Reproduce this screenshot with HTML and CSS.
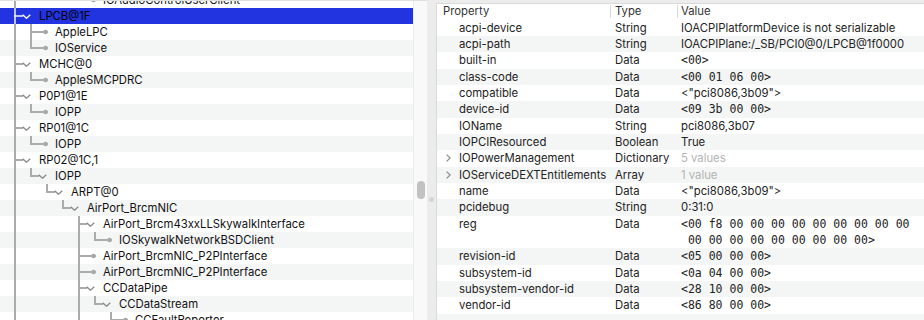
FILE: index.html
```html
<!DOCTYPE html>
<html>
  <head>
    <title>IORegistryExplorer - LPCB@1F</title>
    <link rel="stylesheet" href="styles.css">
  </head>

  <body>
    <div class="window">
      <!-- Arbol del registro -->
      <div class="tree-pane">
        <div class="tree">
          <div class="tree-list">
            <div class="node leaf"><i class="guide pipe"></i><i class="guide"></i><i class="guide"></i><i class="guide"></i><i class="guide elbow"></i><span class="mark"></span><span class="label">IOAudioControlUserClient</span></div>
            <div class="node branch selected"><i class="guide tee"></i><span class="mark"><svg width="9" height="5" viewBox="0 0 9 5"><polyline points="0.7,0.7 4.5,4.3 8.3,0.7"/></svg></span><span class="label">LPCB@1F</span></div>
            <div class="node leaf"><i class="guide pipe"></i><i class="guide tee"></i><span class="mark"></span><span class="label">AppleLPC</span></div>
            <div class="node leaf"><i class="guide pipe"></i><i class="guide elbow"></i><span class="mark"></span><span class="label">IOService</span></div>
            <div class="node branch"><i class="guide tee"></i><span class="mark"><svg width="9" height="5" viewBox="0 0 9 5"><polyline points="0.7,0.7 4.5,4.3 8.3,0.7"/></svg></span><span class="label">MCHC@0</span></div>
            <div class="node leaf"><i class="guide pipe"></i><i class="guide elbow"></i><span class="mark"></span><span class="label">AppleSMCPDRC</span></div>
            <div class="node branch"><i class="guide tee"></i><span class="mark"><svg width="9" height="5" viewBox="0 0 9 5"><polyline points="0.7,0.7 4.5,4.3 8.3,0.7"/></svg></span><span class="label">P0P1@1E</span></div>
            <div class="node leaf"><i class="guide pipe"></i><i class="guide elbow"></i><span class="mark"></span><span class="label">IOPP</span></div>
            <div class="node branch"><i class="guide tee"></i><span class="mark"><svg width="9" height="5" viewBox="0 0 9 5"><polyline points="0.7,0.7 4.5,4.3 8.3,0.7"/></svg></span><span class="label">RP01@1C</span></div>
            <div class="node leaf"><i class="guide pipe"></i><i class="guide elbow"></i><span class="mark"></span><span class="label">IOPP</span></div>
            <div class="node branch"><i class="guide tee"></i><span class="mark"><svg width="9" height="5" viewBox="0 0 9 5"><polyline points="0.7,0.7 4.5,4.3 8.3,0.7"/></svg></span><span class="label">RP02@1C,1</span></div>
            <div class="node branch"><i class="guide pipe"></i><i class="guide elbow"></i><span class="mark"><svg width="9" height="5" viewBox="0 0 9 5"><polyline points="0.7,0.7 4.5,4.3 8.3,0.7"/></svg></span><span class="label">IOPP</span></div>
            <div class="node branch"><i class="guide pipe"></i><i class="guide"></i><i class="guide elbow"></i><span class="mark"><svg width="9" height="5" viewBox="0 0 9 5"><polyline points="0.7,0.7 4.5,4.3 8.3,0.7"/></svg></span><span class="label">ARPT@0</span></div>
            <div class="node branch"><i class="guide pipe"></i><i class="guide"></i><i class="guide"></i><i class="guide elbow"></i><span class="mark"><svg width="9" height="5" viewBox="0 0 9 5"><polyline points="0.7,0.7 4.5,4.3 8.3,0.7"/></svg></span><span class="label">AirPort_BrcmNIC</span></div>
            <div class="node branch"><i class="guide pipe"></i><i class="guide"></i><i class="guide"></i><i class="guide"></i><i class="guide tee"></i><span class="mark"><svg width="9" height="5" viewBox="0 0 9 5"><polyline points="0.7,0.7 4.5,4.3 8.3,0.7"/></svg></span><span class="label">AirPort_Brcm43xxLLSkywalkInterface</span></div>
            <div class="node leaf"><i class="guide pipe"></i><i class="guide"></i><i class="guide"></i><i class="guide"></i><i class="guide pipe"></i><i class="guide elbow"></i><span class="mark"></span><span class="label">IOSkywalkNetworkBSDClient</span></div>
            <div class="node leaf"><i class="guide pipe"></i><i class="guide"></i><i class="guide"></i><i class="guide"></i><i class="guide tee"></i><span class="mark"></span><span class="label">AirPort_BrcmNIC_P2PInterface</span></div>
            <div class="node leaf"><i class="guide pipe"></i><i class="guide"></i><i class="guide"></i><i class="guide"></i><i class="guide tee"></i><span class="mark"></span><span class="label">AirPort_BrcmNIC_P2PInterface</span></div>
            <div class="node branch"><i class="guide pipe"></i><i class="guide"></i><i class="guide"></i><i class="guide"></i><i class="guide tee"></i><span class="mark"><svg width="9" height="5" viewBox="0 0 9 5"><polyline points="0.7,0.7 4.5,4.3 8.3,0.7"/></svg></span><span class="label">CCDataPipe</span></div>
            <div class="node branch"><i class="guide pipe"></i><i class="guide"></i><i class="guide"></i><i class="guide"></i><i class="guide pipe"></i><i class="guide elbow"></i><span class="mark"><svg width="9" height="5" viewBox="0 0 9 5"><polyline points="0.7,0.7 4.5,4.3 8.3,0.7"/></svg></span><span class="label">CCDataStream</span></div>
            <div class="node leaf"><i class="guide pipe"></i><i class="guide"></i><i class="guide"></i><i class="guide"></i><i class="guide pipe"></i><i class="guide"></i><i class="guide tee"></i><span class="mark"></span><span class="label">CCFaultReporter</span></div>
          </div>
        </div>
        <div class="vscroll"><div class="thumb"></div></div>
      </div>

      <div class="splitter"><span class="grip"></span></div>

      <!-- Propiedades del nodo -->
      <div class="props">
        <div class="props-head">
          <div class="col">Property</div>
          <div class="col">Type</div>
          <div class="col">Value</div>
        </div>
        <div class="prop-list">
          <div class="prop"><div class="name"><span class="disc"></span>acpi-device</div><div class="type">String</div><div class="value">IOACPIPlatformDevice is not serializable</div></div>
          <div class="prop"><div class="name"><span class="disc"></span>acpi-path</div><div class="type">String</div><div class="value">IOACPIPlane:/_SB/PCI0@0/LPCB@1f0000</div></div>
          <div class="prop"><div class="name"><span class="disc"></span>built-in</div><div class="type">Data</div><div class="value mono">&lt;00&gt;</div></div>
          <div class="prop"><div class="name"><span class="disc"></span>class-code</div><div class="type">Data</div><div class="value mono">&lt;00 01 06 00&gt;</div></div>
          <div class="prop"><div class="name"><span class="disc"></span>compatible</div><div class="type">Data</div><div class="value">&lt;"pci8086,3b09"&gt;</div></div>
          <div class="prop"><div class="name"><span class="disc"></span>device-id</div><div class="type">Data</div><div class="value mono">&lt;09 3b 00 00&gt;</div></div>
          <div class="prop"><div class="name"><span class="disc"></span>IOName</div><div class="type">String</div><div class="value">pci8086,3b07</div></div>
          <div class="prop"><div class="name"><span class="disc"></span>IOPCIResourced</div><div class="type">Boolean</div><div class="value">True</div></div>
          <div class="prop"><div class="name"><span class="disc"><svg width="5" height="8" viewBox="0 0 5 8"><polyline points="0.6,0.6 4.2,4 0.6,7.4"/></svg></span>IOPowerManagement</div><div class="type">Dictionary</div><div class="value dim">5 values</div></div>
          <div class="prop"><div class="name"><span class="disc"><svg width="5" height="8" viewBox="0 0 5 8"><polyline points="0.6,0.6 4.2,4 0.6,7.4"/></svg></span>IOServiceDEXTEntitlements</div><div class="type">Array</div><div class="value dim">1 value</div></div>
          <div class="prop"><div class="name"><span class="disc"></span>name</div><div class="type">Data</div><div class="value">&lt;"pci8086,3b09"&gt;</div></div>
          <div class="prop"><div class="name"><span class="disc"></span>pcidebug</div><div class="type">String</div><div class="value">0:31:0</div></div>
          <div class="prop tall"><div class="name"><span class="disc"></span>reg</div><div class="type">Data</div><div class="value mono"><div>&lt;00 f8 00 00 00 00 00 00 00 00 00</div><div class="wrap">00 00 00 00 00 00 00 00 00&gt;</div></div></div>
          <div class="prop"><div class="name"><span class="disc"></span>revision-id</div><div class="type">Data</div><div class="value mono">&lt;05 00 00 00&gt;</div></div>
          <div class="prop"><div class="name"><span class="disc"></span>subsystem-id</div><div class="type">Data</div><div class="value mono">&lt;0a 04 00 00&gt;</div></div>
          <div class="prop"><div class="name"><span class="disc"></span>subsystem-vendor-id</div><div class="type">Data</div><div class="value mono">&lt;28 10 00 00&gt;</div></div>
          <div class="prop"><div class="name"><span class="disc"></span>vendor-id</div><div class="type">Data</div><div class="value mono">&lt;86 80 00 00&gt;</div></div>
          <div class="prop"></div>
        </div>
      </div>
    </div>
  </body>
</html>
```

FILE: styles.css
```css
body {
  margin: 0;
  background: #ececec;
  font-family: Inter, "Noto Sans", sans-serif;
  font-size: 11.3px;
  color: #111;
}
.window {
  display: flex;
  height: 320px;
  overflow: hidden;
}

/* arbol */
.tree-pane {
  width: 427px;
  flex: none;
  display: flex;
  background: #fff;
  border-top: 1px solid #e0e0e0;
}
.tree {
  flex: 1;
  overflow: hidden;
}
.tree-list {
  margin-top: -9px;
}
.node {
  --line: #ababab;
  --chev: #8c8c8c;
  display: flex;
  height: 16px;
  padding-left: 7px;
  white-space: nowrap;
}
.node:nth-child(even) {
  background: #f4f5f5;
}
.node.selected {
  --line: rgba(255, 255, 255, 0.7);
  --chev: #fff;
  background: #2234e0;
  color: #000;
}
.guide {
  width: 16px;
  flex: none;
}
.pipe {
  background: linear-gradient(var(--line), var(--line)) 7px 0 / 2px 100% no-repeat;
}
.tee {
  background:
    linear-gradient(var(--line), var(--line)) 7px 0 / 2px 100% no-repeat,
    linear-gradient(var(--line), var(--line)) 7px 7px / 9px 2px no-repeat;
}
.elbow {
  background:
    linear-gradient(var(--line), var(--line)) 7px 0 / 2px 9px no-repeat,
    linear-gradient(var(--line), var(--line)) 7px 7px / 9px 2px no-repeat;
}
.mark {
  width: 16px;
  flex: none;
  display: flex;
  align-items: center;
}
.leaf .mark {
  background:
    linear-gradient(var(--line), var(--line)) 0 7px / 5px 2px no-repeat,
    radial-gradient(circle at 6.5px 8px, var(--line) 2.1px, transparent 2.7px);
}
.mark svg {
  margin-left: -1px;
  fill: none;
  stroke: var(--chev);
  stroke-width: 1.3;
}
.label {
  line-height: 16px;
}
.vscroll {
  width: 14px;
  flex: none;
  box-sizing: border-box;
  background: #f9f9f9;
  border-left: 1px solid #ececec;
}
.thumb {
  width: 8px;
  height: 18px;
  margin: 180px 0 0 3px;
  border-radius: 4px;
  background: #c2c2c2;
}

/* separador */
.splitter {
  width: 9px;
  flex: none;
  padding-top: 197px;
}
.grip {
  display: block;
  width: 5px;
  height: 5px;
  margin-left: 2px;
  border-radius: 50%;
  background: #d3d3d3;
}

/* propiedades */
.props {
  flex: 1;
  margin-top: 3px;
  background: #fff;
  border-top: 1px solid #d9d9d9;
  border-left: 1px solid #d9d9d9;
  color: #222;
  white-space: nowrap;
  overflow: hidden;
}
.props-head {
  display: grid;
  grid-template-columns: 173px 67px 1fr;
  align-items: center;
  height: 15.67px;
  color: #333;
}
.col {
  line-height: 13px;
  padding-left: 6px;
}
.col + .col {
  border-left: 1px solid #dadada;
  padding-left: 4px;
}
.col:last-child {
  padding-left: 3px;
}
.prop {
  display: grid;
  grid-template-columns: 173px 67px 1fr;
  height: 16.33px;
  line-height: 16.33px;
}
.prop:nth-child(even) {
  background: #f4f5f5;
}
.prop.tall {
  height: 32.67px;
}
.name {
  display: flex;
  padding-left: 9px;
}
.disc {
  width: 13px;
  flex: none;
  display: flex;
  align-items: center;
}
.disc svg {
  fill: none;
  stroke: #888;
  stroke-width: 1.2;
}
.type {
  padding-left: 5px;
}
.value {
  padding-left: 4px;
}
.mono {
  font-family: "DejaVu Sans Mono", monospace;
  font-size: 11.5px;
}
.wrap {
  padding-left: 1ch;
}
.dim {
  color: #b3b3b3;
}
```
